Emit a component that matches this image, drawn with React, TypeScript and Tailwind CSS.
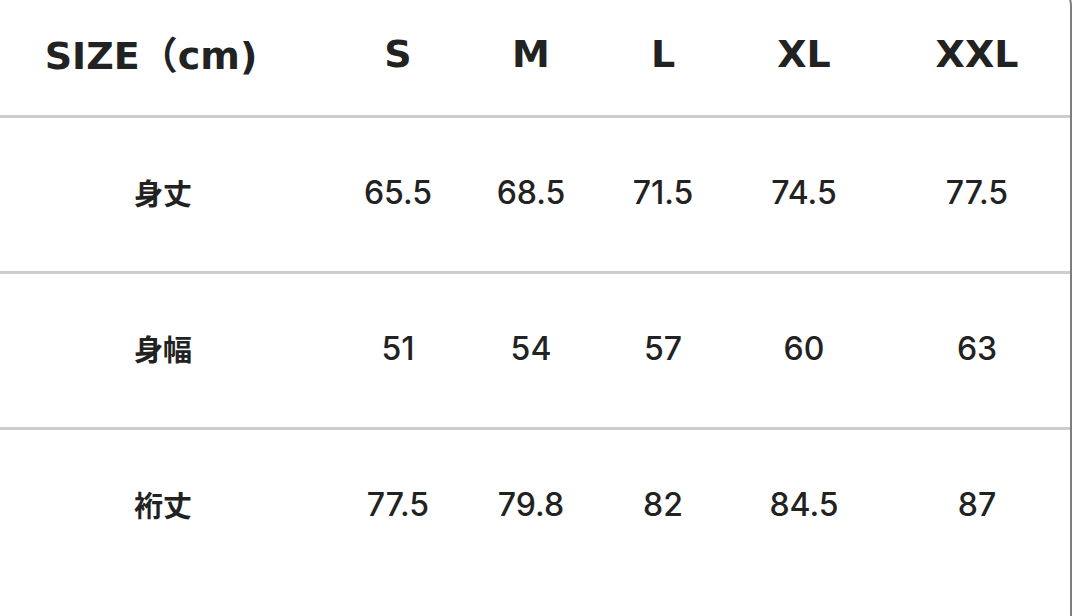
const sizes = ['S', 'M', 'L', 'XL', 'XXL'];

const rows = [
  {label: '身丈', values: ['65.5', '68.5', '71.5', '74.5', '77.5']},
  {label: '身幅', values: ['51', '54', '57', '60', '63']},
  {label: '裄丈', values: ['77.5', '79.8', '82', '84.5', '87']},
];

const grid = 'grid grid-cols-[326px_144px_122px_142px_140px_1fr]';
const lastCell = 'flex items-center justify-center pl-[10px]';
const cell = 'flex items-center justify-center';

export default function App() {
  return (
    <div className="w-[1073px] h-[616px] overflow-hidden bg-white">
      <div className="w-[1072px] h-[650px] -mt-[18px] border-r-2 border-t-2 border-[#7d7d7d] rounded-tr-[24px] text-[#222]">
        <div
          className={`${grid} h-[131px] pt-[10px] font-bold text-[38px]`}
          style={{fontFamily: '"DejaVu Sans", "Noto Sans CJK JP", sans-serif'}}
        >
          <div className={`${cell} pr-[24px]`}>
            <span>
              SIZE<span style={{fontFamily: '"Noto Sans CJK JP", sans-serif'}}>（</span>cm)
            </span>
          </div>
          {sizes.map((s, i) => (
            <div key={s} className={i === sizes.length - 1 ? lastCell : cell}>
              {s}
            </div>
          ))}
        </div>
        {rows.map(row => (
          <div key={row.label}>
            <div className="h-[3px] bg-[#cdcdcd]" />
            <div className={`${grid} h-[153px] pb-[3px]`}>
              <div
                className={`${cell} text-[29px] font-semibold`}
                style={{fontFamily: '"Noto Sans CJK JP", sans-serif'}}
              >
                {row.label}
              </div>
              {row.values.map((v, i) => (
                <div
                  key={i}
                  className={`${i === row.values.length - 1 ? lastCell : cell} text-[32px] font-medium`}
                  style={{fontFamily: 'Inter, "Noto Sans", sans-serif'}}
                >
                  {v}
                </div>
              ))}
            </div>
          </div>
        ))}
      </div>
    </div>
  );
}
